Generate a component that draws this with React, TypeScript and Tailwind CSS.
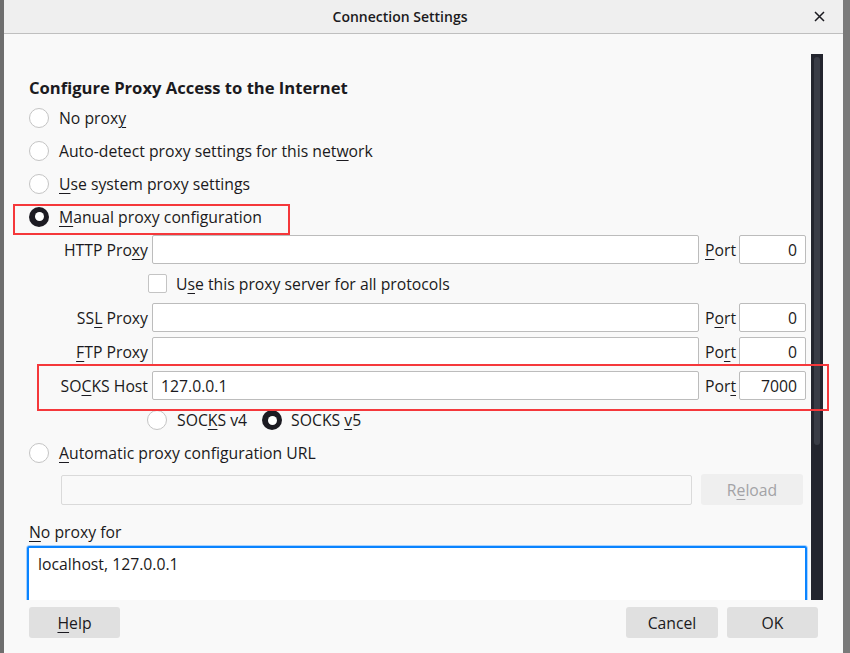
import React from "react";

const FONT = { fontFamily: "'Open Sans', Lato, sans-serif" };

function U({ children }: { children: React.ReactNode }) {
  return <span className="underline underline-offset-[3px] decoration-1">{children}</span>;
}

function Radio({ checked }: { checked?: boolean }) {
  if (checked) {
    return (
      <span className="flex h-[20px] w-[20px] shrink-0 items-center justify-center rounded-full bg-[#1c1b22]">
        <span className="h-[9px] w-[9px] rounded-full bg-white" />
      </span>
    );
  }
  return <span className="block h-[20px] w-[20px] shrink-0 rounded-full border border-[#c4c4c4] bg-white" />;
}

function RadioRow({ checked, children }: { checked?: boolean; children: React.ReactNode }) {
  return (
    <div className="flex h-[33px] items-center">
      <div className="mr-[10px]">
        <Radio checked={checked} />
      </div>
      <span>{children}</span>
    </div>
  );
}

function ProxyRow({
  label,
  port,
  value,
  portLabel,
  className,
}: {
  label: React.ReactNode;
  port: string;
  value?: string;
  portLabel: React.ReactNode;
  className?: string;
}) {
  return (
    <div className={"flex h-[29px] items-center " + (className ?? "")}>
      <div className="w-[119px] whitespace-nowrap text-right">{label}</div>
      <div className="ml-[4px] flex h-[29px] w-[547px] items-center rounded-[2px] border border-[#bcbcbc] bg-white pl-[8px]">
        {value}
      </div>
      <div className="ml-[6px] w-[30px]">{portLabel}</div>
      <div className="ml-[4px] flex h-[29px] w-[67px] items-center justify-end rounded-[2px] border border-[#bcbcbc] bg-white pr-[8px]">
        {port}
      </div>
    </div>
  );
}

export default function App() {
  return (
    <div className="flex h-[653px] w-[850px] overflow-hidden bg-[#777777] text-[15.75px] leading-[22px] text-[#1b1a20]" style={FONT}>
      <div className="w-[4px] shrink-0 bg-[#6e6e6e]" />
      <div className="flex w-[839px] shrink-0 flex-col bg-[#f9f9f9]">
        {/* Title bar */}
        <div className="relative flex h-[34px] shrink-0 items-center justify-center border-b border-[#bfbfbf] bg-[#efefef] pr-[47px]">
          <span className="text-[14px] font-semibold">Connection Settings</span>
          <svg className="absolute left-[810px] top-[11px]" width="11" height="11" viewBox="0 0 11 11">
            <path d="M1 1 L10 10 M10 1 L1 10" stroke="#1b1a20" strokeWidth="1.5" />
          </svg>
        </div>

        {/* Scroll area */}
        <div className="relative flex h-[566px] shrink-0">
          <div className="w-[807px] shrink-0 overflow-hidden pl-[25px] pt-[40px]">
            <div className="flex h-[27px] items-center text-[16.6px] font-bold">
              Configure Proxy Access to the Internet
            </div>
            <RadioRow>
              No prox<U>y</U>
            </RadioRow>
            <RadioRow>
              Auto-detect proxy settings for this net<U>w</U>ork
            </RadioRow>
            <RadioRow>
              <U>U</U>se system proxy settings
            </RadioRow>
            <RadioRow checked>
              <U>M</U>anual proxy configuration
            </RadioRow>

            <ProxyRow
              className="mt-[2px]"
              label={
                <>
                  HTTP Pro<U>x</U>y
                </>
              }
              portLabel={
                <>
                  <U>P</U>ort
                </>
              }
              port="0"
            />
            <div className="flex h-[39px] items-center">
              <span className="ml-[119px] block h-[19px] w-[19px] rounded-[2px] border border-[#c4c4c4] bg-white" />
              <span className="ml-[9px]">
                U<U>s</U>e this proxy server for all protocols
              </span>
            </div>
            <ProxyRow
              label={
                <>
                  SS<U>L</U> Proxy
                </>
              }
              portLabel={
                <>
                  P<U>o</U>rt
                </>
              }
              port="0"
            />
            <ProxyRow
              className="mt-[5px]"
              label={
                <>
                  <U>F</U>TP Proxy
                </>
              }
              portLabel={
                <>
                  Po<U>r</U>t
                </>
              }
              port="0"
            />
            <ProxyRow
              className="mt-[5px]"
              label={
                <>
                  SO<U>C</U>KS Host
                </>
              }
              portLabel={
                <>
                  Por<U>t</U>
                </>
              }
              port="7000"
              value="127.0.0.1"
            />
            <div className="flex h-[40px] items-center pl-[118px]">
              <Radio />
              <span className="ml-[10px]">
                SOC<U>K</U>S v4
              </span>
              <span className="ml-[15px]">
                <Radio checked />
              </span>
              <span className="ml-[9px]">
                SOCKS <U>v</U>5
              </span>
            </div>
            <div className="flex h-[26px] items-center">
              <div className="mr-[10px]">
                <Radio />
              </div>
              <span>
                <U>A</U>utomatic proxy configuration URL
              </span>
            </div>
            <div className="mt-[8px] flex items-center">
              <div className="ml-[32px] h-[30px] w-[631px] rounded-[2px] border border-[#dadada] bg-[#f9f9f9]" />
              <div className="ml-[9px] flex h-[31px] w-[102px] items-center justify-center rounded-[3px] bg-[#efefef] text-[#a3a3a6]">
                R<U>e</U>load
              </div>
            </div>
            <div className="mt-[15px] flex h-[24px] items-center">
              <U>N</U>o proxy for
            </div>
            <div className="ml-[-3px] mt-[1px] h-[80px] w-[782px] rounded-[3px] border border-[#a8d2ff] p-0">
              <div className="h-full w-full rounded-[2px] border-2 border-[#0a84ff] bg-white pl-[9px] pt-[5px]">
                localhost, 127.0.0.1
              </div>
            </div>
          </div>
          {/* Scrollbar */}
          <div className="mt-[20px] h-[546px] w-[12px] shrink-0 bg-[#23252e] px-[3px] pt-[3px]">
            <div className="h-[388px] w-full rounded-[3px] bg-[#393c46]" />
          </div>
          <div className="w-[20px] shrink-0" />

          {/* Annotation boxes */}
          <div className="pointer-events-none absolute left-[9px] top-[170px] h-[31px] w-[277px] border-2 border-[#f5383b]" />
          <div className="pointer-events-none absolute left-[33px] top-[330px] h-[47px] w-[792px] border-2 border-[#f5383b]" />
        </div>

        {/* Footer */}
        <div className="relative flex h-[53px] shrink-0 items-start pl-[25px] pr-[25px] pt-[7px]">
          <div className="flex h-[31px] w-[91px] items-center justify-center rounded-[3px] bg-[#e0e0e0]">
            <U>H</U>elp
          </div>
          <div className="flex-1" />
          <div className="flex h-[31px] w-[92px] items-center justify-center rounded-[3px] bg-[#e0e0e0]">Cancel</div>
          <div className="ml-[9px] flex h-[31px] w-[91px] items-center justify-center rounded-[3px] bg-[#e0e0e0]">OK</div>
        </div>
      </div>
      <div className="w-[7px] shrink-0 bg-[#7a7a7a]" />
    </div>
  );
}
